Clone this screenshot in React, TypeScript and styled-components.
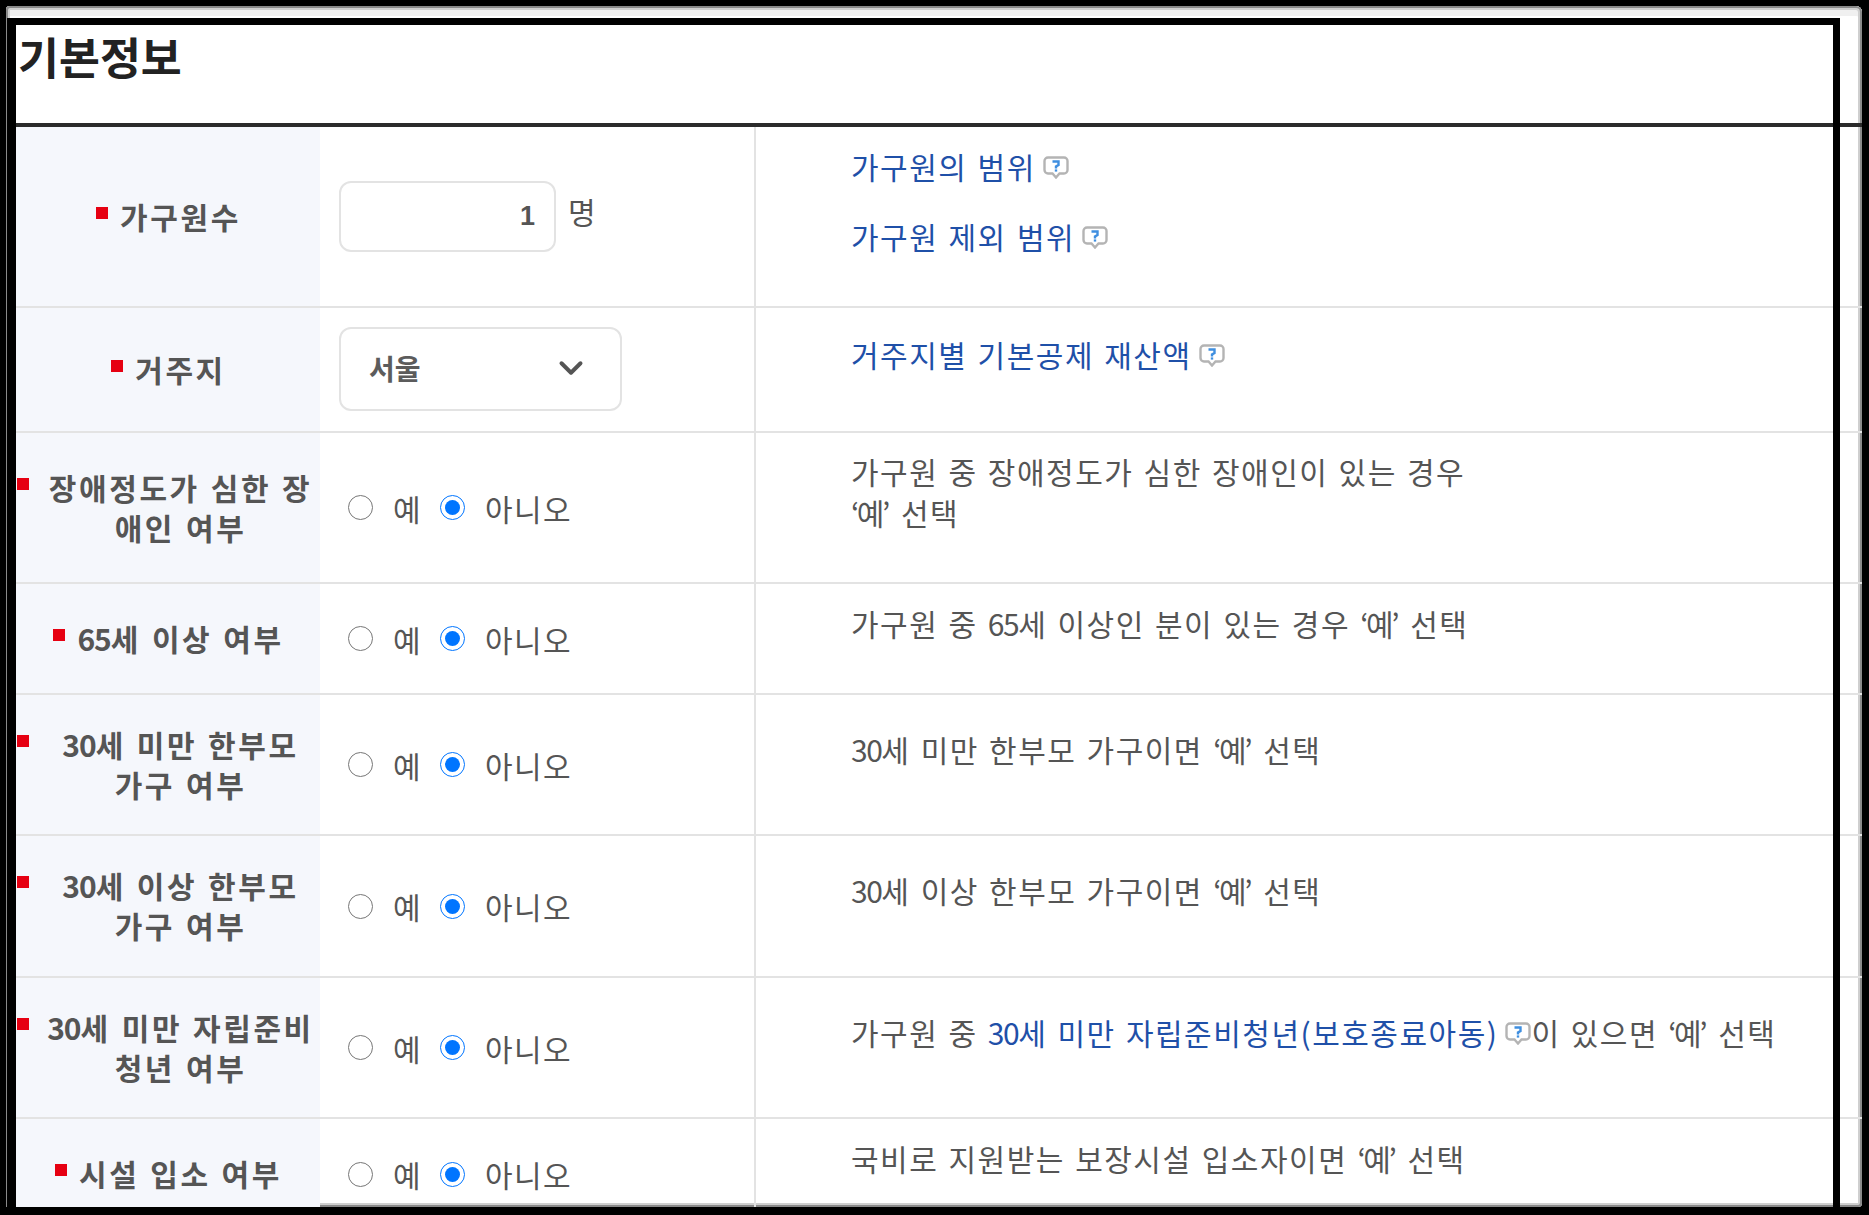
import React from 'react';
import styled, { createGlobalStyle } from 'styled-components';
import { ChevronDown } from 'lucide-react';

const GlobalStyle = createGlobalStyle`
  html, body {
    margin: 0;
    padding: 0;
    background: #000;
  }
  * {
    box-sizing: border-box;
  }
`;

const Page = styled.div`
  width: 1869px;
  height: 1215px;
  padding: 6px 7px 8px 6px;
  overflow: hidden;
  font-family: "Noto Sans CJK KR", "Liberation Sans", sans-serif;
  color: #555;
`;

const Sheet = styled.main`
  position: relative;
  height: 100%;
  padding: 19px 0 0 10px;
  display: flex;
  flex-direction: column;
  background: #fff;
  border-radius: 4px 6px 4px 0;
  box-shadow: inset 0 0 0 2px #8a8a8a, inset 0 0 0 4px #cfcfcf, inset 0 10px 0 #f0f0f0;
  overflow: hidden;
`;

const Frame = styled.div`
  position: absolute;
  top: 12px;
  left: 1px;
  right: 22px;
  bottom: -10px;
  border: solid #000;
  border-width: 7px 7px 0 9px;
  pointer-events: none;
`;

const Heading = styled.h2`
  flex: none;
  height: 102px;
  margin: 0;
  padding: 0 0 0 2px;
  font-size: 44.5px;
  font-weight: 700;
  line-height: 62px;
  color: #222;
  border-bottom: 4px solid #2b2b2b;
`;

const Row = styled.div<{ $h: number }>`
  flex: none;
  display: grid;
  grid-template-columns: 304px 436px 1fr;
  height: ${(p) => p.$h}px;
  border-bottom: 2px solid #e3e3e3;
`;

const LabelCell = styled.div`
  display: flex;
  align-items: center;
  justify-content: center;
  padding-left: 25px;
  background: #f5f7fc;
`;

const LabelText = styled.div<{ $wide?: boolean }>`
  position: relative;
  width: ${(p) => (p.$wide ? '100%' : 'auto')};
  margin-bottom: 2px;
  font-size: 30px;
  font-weight: 700;
  line-height: 40px;
  letter-spacing: 2.6px;
  word-spacing: 1.5px;
  white-space: nowrap;
  text-align: center;
  color: #555;
`;

const Marker = styled.span`
  position: absolute;
  top: 11px;
  left: -24px;
  width: 12px;
  height: 12px;
  background: #e60012;
`;

const ValueCell = styled.div`
  display: flex;
  align-items: center;
  gap: 12px;
  padding-left: 19px;
  border-right: 2px solid #e3e3e3;
`;

const CountInput = styled.input`
  width: 217px;
  height: 71px;
  padding: 0 19px 0 0;
  border: 2px solid #e3e3e3;
  border-radius: 12px;
  outline: none;
  text-align: right;
  font-family: "Liberation Sans", sans-serif;
  font-size: 27px;
  font-weight: 700;
  color: #555;
  background: #fff;
`;

const Unit = styled.span`
  margin-bottom: 12px;
  font-size: 30px;
  line-height: 40px;
`;

const SelectBox = styled.div`
  position: relative;
  width: 283px;
  height: 84px;
  margin-bottom: 1px;
`;

const Select = styled.select`
  width: 100%;
  height: 100%;
  padding: 0 0 2px 28px;
  border: 2px solid #e3e3e3;
  border-radius: 12px;
  outline: none;
  appearance: none;
  background: #fff;
  font-family: inherit;
  font-size: 28px;
  font-weight: 700;
  color: #5c5c5c;
`;

const Chevron = styled(ChevronDown)`
  position: absolute;
  top: 22px;
  right: 32px;
  color: #555;
  pointer-events: none;
`;

const RadioGroup = styled.div`
  display: flex;
  align-items: center;
  margin-left: 9px;
  font-size: 30px;
  line-height: 40px;
  letter-spacing: 1.4px;
`;

const RadioLabel = styled.label`
  display: flex;
  align-items: center;
  gap: 20px;
  margin-right: 18px;
`;

const Radio = styled.input`
  width: 25px;
  height: 25px;
  margin: 0;
`;

const DescCell = styled.div`
  display: flex;
  flex-direction: column;
  justify-content: center;
  align-items: flex-start;
  gap: 29px;
  padding: 0 0 31px 95px;
  font-size: 30px;
  line-height: 41px;
  letter-spacing: 1.5px;
  word-spacing: 2px;
`;

const Desc = styled.div<{ $width?: number }>`
  max-width: ${(p) => (p.$width ? `${p.$width}px` : 'none')};
  word-break: keep-all;
`;

const Num = styled.span`
  letter-spacing: -1.5px;
`;

const LabelNum = styled.span`
  letter-spacing: -1px;
`;

const Quoted = styled.span`
  letter-spacing: -2.5px;
  margin-right: 3px;
`;

const HelpLink = styled.a`
  color: #1f50a8;
  text-decoration: none;
`;

const HelpSvg = styled.svg`
  display: inline-block;
  margin: 0 0 0 7px;
  vertical-align: baseline;
`;

const HelpIcon = () => (
  <HelpSvg width="26" height="23" viewBox="0 0 26 23">
    <path
      d="M5 1.5h16a3.5 3.5 0 0 1 3.5 3.5v9a3.5 3.5 0 0 1-3.5 3.5h-4.5L13 21.5l-3.5-4H5A3.5 3.5 0 0 1 1.5 14V5A3.5 3.5 0 0 1 5 1.5z"
      fill="#fff"
      stroke="#b4b4b4"
      strokeWidth="2.4"
    />
    <path d="M9.5 5.5h6v3.5l-2.5 1.5v2" fill="none" stroke="#3f8fe0" strokeWidth="2.4" />
    <rect x="11.8" y="13.4" width="2.4" height="2.2" fill="#3f8fe0" />
  </HelpSvg>
);

const YesNo = () => (
  <RadioGroup>
    <RadioLabel>
      <Radio type="radio" readOnly checked={false} />예
    </RadioLabel>
    <RadioLabel>
      <Radio type="radio" readOnly checked />아니오
    </RadioLabel>
  </RadioGroup>
);

// digits run narrower than hangul in the labels
const LabelLine = ({ text }: { text: string }) => (
  <>
    {text.split(/(\d+)/).map((part, i) =>
      /^\d+$/.test(part) ? <LabelNum key={i}>{part}</LabelNum> : part
    )}
  </>
);

const Label = ({ lines }: { lines: string[] }) => (
  <LabelCell>
    <LabelText $wide={lines.length > 1}>
      <Marker />
      {lines.map((line, i) => (
        <React.Fragment key={line}>
          {i > 0 && <br />}
          <LabelLine text={line} />
        </React.Fragment>
      ))}
    </LabelText>
  </LabelCell>
);

export default function App() {
  return (
    <Page>
      <GlobalStyle />
      <Sheet>
        <Heading>기본정보</Heading>

        <Row $h={181}>
          <Label lines={['가구원수']} />
          <ValueCell>
            <CountInput readOnly value="1" />
            <Unit>명</Unit>
          </ValueCell>
          <DescCell>
            <Desc>
              <HelpLink>가구원의 범위</HelpLink>
              <HelpIcon />
            </Desc>
            <Desc>
              <HelpLink>가구원 제외 범위</HelpLink>
              <HelpIcon />
            </Desc>
          </DescCell>
        </Row>

        <Row $h={125}>
          <Label lines={['거주지']} />
          <ValueCell>
            <SelectBox>
              <Select defaultValue="서울">
                <option>서울</option>
              </Select>
              <Chevron size={38} strokeWidth={2.5} />
            </SelectBox>
          </ValueCell>
          <DescCell>
            <Desc>
              <HelpLink>거주지별 기본공제 재산액</HelpLink>
              <HelpIcon />
            </Desc>
          </DescCell>
        </Row>

        <Row $h={151}>
          <Label lines={['장애정도가 심한 장', '애인 여부']} />
          <ValueCell>
            <YesNo />
          </ValueCell>
          <DescCell>
            <Desc $width={640}>
              가구원 중 장애정도가 심한 장애인이 있는 경우 <Quoted>‘예’</Quoted> 선택
            </Desc>
          </DescCell>
        </Row>

        <Row $h={111}>
          <Label lines={['65세 이상 여부']} />
          <ValueCell>
            <YesNo />
          </ValueCell>
          <DescCell>
            <Desc>
              가구원 중 <Num>65</Num>세 이상인 분이 있는 경우 <Quoted>‘예’</Quoted> 선택
            </Desc>
          </DescCell>
        </Row>

        <Row $h={141}>
          <Label lines={['30세 미만 한부모', '가구 여부']} />
          <ValueCell>
            <YesNo />
          </ValueCell>
          <DescCell>
            <Desc>
              <Num>30</Num>세 미만 한부모 가구이면 <Quoted>‘예’</Quoted> 선택
            </Desc>
          </DescCell>
        </Row>

        <Row $h={142}>
          <Label lines={['30세 이상 한부모', '가구 여부']} />
          <ValueCell>
            <YesNo />
          </ValueCell>
          <DescCell>
            <Desc>
              <Num>30</Num>세 이상 한부모 가구이면 <Quoted>‘예’</Quoted> 선택
            </Desc>
          </DescCell>
        </Row>

        <Row $h={141}>
          <Label lines={['30세 미만 자립준비', '청년 여부']} />
          <ValueCell>
            <YesNo />
          </ValueCell>
          <DescCell>
            <Desc>
              가구원 중{' '}
              <HelpLink>
                <Num>30</Num>세 미만 자립준비청년(보호종료아동)
              </HelpLink>
              <HelpIcon />이 있으면 <Quoted>‘예’</Quoted> 선택
            </Desc>
          </DescCell>
        </Row>

        <Row $h={112}>
          <Label lines={['시설 입소 여부']} />
          <ValueCell>
            <YesNo />
          </ValueCell>
          <DescCell>
            <Desc>
              국비로 지원받는 보장시설 입소자이면 <Quoted>‘예’</Quoted> 선택
            </Desc>
          </DescCell>
        </Row>

        <Frame />
      </Sheet>
    </Page>
  );
}
